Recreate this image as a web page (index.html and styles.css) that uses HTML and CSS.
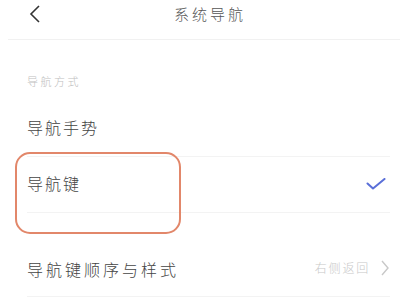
FILE: index.html
```html
<!DOCTYPE html>
<html lang="zh">
<head>
<meta charset="utf-8">
<link rel="stylesheet" href="styles.css">
</head>
<body>
<div class="page">
  <header class="topbar">
    <svg class="back" width="14" height="20" viewBox="0 0 14 20"><path d="M11 2 L3 10 L11 18" fill="none" stroke="#333" stroke-width="1.6"/></svg>
    <div class="title">系统导航</div>
  </header>
  <div class="section-label">导航方式</div>
  <div class="row bordered"><span class="label">导航手势</span></div>
  <div class="row bordered"><span class="label">导航键</span>
    <svg class="check" width="20" height="12" viewBox="0 0 20 12"><path d="M1.5 5.5 L7 10.5 L18.5 1" fill="none" stroke="#5a6fd8" stroke-width="2" stroke-linecap="round" stroke-linejoin="round"/></svg>
  </div>
  <div class="row bordered gap-top"><span class="label wide">导航键顺序与样式</span>
    <span class="value">右侧返回
      <svg class="chev" width="10" height="18" viewBox="0 0 10 18"><path d="M2 2 L8 9 L2 16" fill="none" stroke="#c8c8c8" stroke-width="1.4"/></svg>
    </span>
  </div>
  <div class="highlight"></div>
</div>
</body>
</html>
```
FILE: styles.css
```css
html, body { margin: 0; padding: 0; background: #fff; }
body { font-family: "Noto Sans CJK SC", "Noto Sans", sans-serif; color: #444; }
.page { position: relative; width: 400px; height: 300px; overflow: hidden; }
.topbar {
  height: 40px; box-sizing: border-box; margin-left: 8px;
  border-bottom: 1px solid #f1f1f1;
  display: flex; align-items: center; position: relative;
}
.back { position: absolute; left: 20px; top: 4px; }
.title {
  flex: 1; text-align: center; font-size: 15px; letter-spacing: 3px;
  color: #555; font-weight: 300; margin-left: 12px; margin-top: -12px;
}
.section-label {
  height: 61px; box-sizing: border-box; padding: 33px 0 0 27px;
  font-size: 11px; letter-spacing: 2.5px; color: #c0c0c0; font-weight: 300;
}
.row {
  height: 56px; box-sizing: border-box; margin: 0 10px 0 27px;
  display: flex; align-items: center; justify-content: space-between;
}
.row.bordered { border-bottom: 1px solid #f3f3f3; }
.row.gap-top { margin-top: 28px; }
.label { font-size: 16px; letter-spacing: 2px; font-weight: 300; margin-top: -3px; }
.label.wide { letter-spacing: 3px; margin-top: 0; }
.check { margin-right: 4px; margin-top: -2px; }
.value {
  display: flex; align-items: center; gap: 10px;
  font-size: 12px; letter-spacing: 1.8px; color: #c8c8c8; font-weight: 300;
  margin-top: -2px;
}
.highlight {
  position: absolute; left: 15px; top: 152px; width: 166px; height: 82px;
  box-sizing: border-box; border: 2px solid #e2876a; border-radius: 15px;
}
```
